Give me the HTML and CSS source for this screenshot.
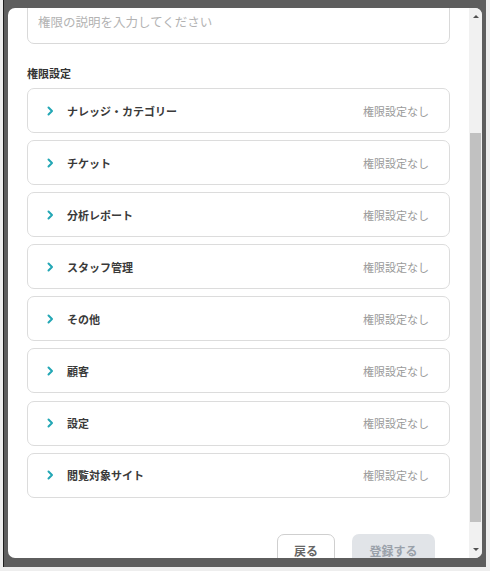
FILE: index.html
```html
<!DOCTYPE html>
<html lang="ja">
<head>
<meta charset="utf-8">
<link rel="stylesheet" href="styles.css">
</head>
<body>
<div class="frame">
  <div class="window">
    <div class="main">
      <div class="textarea">権限の説明を入力してください</div>
      <div class="section-label">権限設定</div>
      <div class="rows">
        <div class="row"><svg class="chev" width="7" height="10" viewBox="0 0 7 10"><polyline points="1.5,1.5 5,5 1.5,8.5"/></svg><span class="row-label">ナレッジ・カテゴリー</span><span class="row-status">権限設定なし</span></div>
        <div class="row"><svg class="chev" width="7" height="10" viewBox="0 0 7 10"><polyline points="1.5,1.5 5,5 1.5,8.5"/></svg><span class="row-label">チケット</span><span class="row-status">権限設定なし</span></div>
        <div class="row"><svg class="chev" width="7" height="10" viewBox="0 0 7 10"><polyline points="1.5,1.5 5,5 1.5,8.5"/></svg><span class="row-label">分析レポート</span><span class="row-status">権限設定なし</span></div>
        <div class="row"><svg class="chev" width="7" height="10" viewBox="0 0 7 10"><polyline points="1.5,1.5 5,5 1.5,8.5"/></svg><span class="row-label">スタッフ管理</span><span class="row-status">権限設定なし</span></div>
        <div class="row"><svg class="chev" width="7" height="10" viewBox="0 0 7 10"><polyline points="1.5,1.5 5,5 1.5,8.5"/></svg><span class="row-label">その他</span><span class="row-status">権限設定なし</span></div>
        <div class="row"><svg class="chev" width="7" height="10" viewBox="0 0 7 10"><polyline points="1.5,1.5 5,5 1.5,8.5"/></svg><span class="row-label">顧客</span><span class="row-status">権限設定なし</span></div>
        <div class="row"><svg class="chev" width="7" height="10" viewBox="0 0 7 10"><polyline points="1.5,1.5 5,5 1.5,8.5"/></svg><span class="row-label">設定</span><span class="row-status">権限設定なし</span></div>
        <div class="row"><svg class="chev" width="7" height="10" viewBox="0 0 7 10"><polyline points="1.5,1.5 5,5 1.5,8.5"/></svg><span class="row-label">閲覧対象サイト</span><span class="row-status">権限設定なし</span></div>
      </div>
      <div class="actions">
        <button class="btn btn-back">戻る</button>
        <button class="btn btn-submit">登録する</button>
      </div>
    </div>
    <div class="scrollbar">
      <div class="sb-btn"><span class="arrow-up"></span></div>
      <div class="sb-track"><div class="sb-thumb"></div></div>
      <div class="sb-btn sb-btn-down"><span class="arrow-down"></span></div>
    </div>
  </div>
</div>
</body>
</html>
```
FILE: styles.css
```css
* { box-sizing: border-box; }
html, body { margin: 0; padding: 0; }
body {
  background: #eeeeee;
  font-family: "Noto Sans CJK JP", "Noto Sans", sans-serif;
  width: 490px;
  height: 571px;
  overflow: hidden;
}
.frame {
  margin-left: 3px;
  width: 483px;
  height: 567px;
  background: #5e5e5e;
  border-left: 1px solid #1f1f1f;
  padding: 8px 4px 9px 4px;
}
.window {
  display: flex;
  height: 100%;
  background: #ffffff;
  border-radius: 7px;
  overflow: hidden;
}
.main {
  flex: 1;
  overflow: hidden;
  padding: 0 19px;
}
.textarea {
  margin-top: -20px;
  height: 56px;
  border: 1px solid #d9d9d9;
  border-radius: 7px;
  display: flex;
  align-items: flex-end;
  padding: 0 10px 12px 10px;
  font-size: 12.5px;
  line-height: 18px;
  color: #b3b3b3;
}
.section-label {
  margin-top: 21px;
  font-size: 11px;
  line-height: 16px;
  font-weight: 700;
  color: #333333;
}
.rows {
  margin-top: 7px;
  display: flex;
  flex-direction: column;
  gap: 7.1px;
}
.row {
  height: 45px;
  border: 1px solid #dcdcdc;
  border-radius: 7px;
  display: flex;
  align-items: center;
  padding: 0 20px 0 19px;
}
.chev {
  flex: none;
  fill: none;
  stroke: #23a7b5;
  stroke-width: 2;
  stroke-linecap: round;
  stroke-linejoin: round;
}
.row-label {
  margin-left: 13px;
  font-size: 11px;
  font-weight: 700;
  color: #3a3a3a;
  flex: 1;
}
.row-status {
  font-size: 11px;
  color: #9a9a9a;
}
.actions {
  margin-top: 36px;
  display: flex;
  justify-content: flex-end;
  gap: 17px;
  padding-right: 15px;
}
.btn {
  height: 34px;
  border-radius: 7px;
  font-family: inherit;
  font-size: 12px;
  line-height: 12px;
  font-weight: 700;
  padding: 0;
}
.btn-back {
  width: 58px;
  background: #ffffff;
  border: 1px solid #cfcfcf;
  color: #666666;
}
.btn-submit {
  width: 83px;
  background: #e1e4e8;
  border: none;
  color: #9aa1aa;
}
.scrollbar {
  width: 13px;
  flex: none;
  background: #f1f1f1;
  display: flex;
  flex-direction: column;
}
.sb-btn {
  height: 17px;
  display: flex;
  justify-content: center;
  align-items: center;
}
.arrow-up {
  width: 0; height: 0;
  border-left: 3px solid transparent;
  border-right: 3px solid transparent;
  border-bottom: 3px solid #505050;
}
.arrow-down {
  width: 0; height: 0;
  border-left: 3px solid transparent;
  border-right: 3px solid transparent;
  border-top: 3px solid #505050;
}
.sb-track {
  flex: 1;
  padding: 108px 1px 0 1px;
}
.sb-thumb {
  height: 389px;
  background: #c1c1c1;
}
```
